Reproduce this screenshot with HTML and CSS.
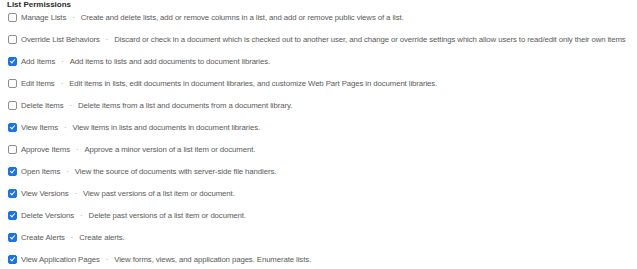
FILE: index.html
```html
<!DOCTYPE HTML>
<html lang="en">
  <head>
    <title>List Permissions</title>
    <meta charset="utf-8">
    <link rel="stylesheet" href="styles.css">
  </head>
  <body>

  <div id="permissions">
    <div class="heading">List Permissions</div>

    <label class="perm"><input type="checkbox"><span class="name">Manage Lists</span><span class="bull">&middot;</span><span class="desc">Create and delete lists, add or remove columns in a list, and add or remove public views of a list.</span></label>
    <label class="perm"><input type="checkbox"><span class="name">Override List Behaviors</span><span class="bull">&middot;</span><span class="desc">Discard or check in a document which is checked out to another user, and change or override settings which allow users to read/edit only their own items</span></label>
    <label class="perm"><input type="checkbox" checked><span class="name">Add Items</span><span class="bull">&middot;</span><span class="desc">Add items to lists and add documents to document libraries.</span></label>
    <label class="perm"><input type="checkbox"><span class="name">Edit Items</span><span class="bull">&middot;</span><span class="desc">Edit items in lists, edit documents in document libraries, and customize Web Part Pages in document libraries.</span></label>
    <label class="perm"><input type="checkbox"><span class="name">Delete Items</span><span class="bull">&middot;</span><span class="desc">Delete items from a list and documents from a document library.</span></label>
    <label class="perm"><input type="checkbox" checked><span class="name">View Items</span><span class="bull">&middot;</span><span class="desc">View items in lists and documents in document libraries.</span></label>
    <label class="perm"><input type="checkbox"><span class="name">Approve Items</span><span class="bull">&middot;</span><span class="desc">Approve a minor version of a list item or document.</span></label>
    <label class="perm"><input type="checkbox" checked><span class="name">Open Items</span><span class="bull">&middot;</span><span class="desc">View the source of documents with server-side file handlers.</span></label>
    <label class="perm"><input type="checkbox" checked><span class="name">View Versions</span><span class="bull">&middot;</span><span class="desc">View past versions of a list item or document.</span></label>
    <label class="perm"><input type="checkbox" checked><span class="name">Delete Versions</span><span class="bull">&middot;</span><span class="desc">Delete past versions of a list item or document.</span></label>
    <label class="perm"><input type="checkbox" checked><span class="name">Create Alerts</span><span class="bull">&middot;</span><span class="desc">Create alerts.</span></label>
    <label class="perm"><input type="checkbox" checked><span class="name">View Application Pages</span><span class="bull">&middot;</span><span class="desc">View forms, views, and application pages. Enumerate lists.</span></label>
  </div>

  </body>
</html>
```

FILE: styles.css
```css
html {
  height: 100%;
}
body {
  margin: 0;
  padding: 0;
  background: #ffffff;
  color: #5a5a5a;
  font-family: "Liberation Sans", Arial, sans-serif;
  font-size: 7.8px;
  letter-spacing: -0.1px;
  height: 100%;
}

#permissions {
  display: flex;
  flex-direction: column;
  padding: 0 0 0 7px;
}

.heading {
  font-weight: bold;
  font-size: 8px;
  letter-spacing: 0;
  color: #2b2b2b;
  height: 10px;
  line-height: 10px;
}

.perm {
  display: flex;
  align-items: center;
  height: 22px;
  margin-top: -4px;
  margin-bottom: 4px;
  white-space: nowrap;
}

.perm input {
  appearance: none;
  -webkit-appearance: none;
  position: relative;
  box-sizing: border-box;
  width: 9px;
  height: 9px;
  margin: 0 4px 0 1px;
  border: 1px solid #8f8f8f;
  border-radius: 2px;
  background: #fff;
}

.perm input:checked {
  background: #1a73e8;
  border-color: #1a73e8;
}

.perm input:checked::after {
  content: "";
  position: absolute;
  left: 2px;
  top: 0px;
  width: 2px;
  height: 4px;
  border: solid #fff;
  border-width: 0 1.4px 1.4px 0;
  transform: rotate(40deg);
}

.bull {
  padding: 0 6px;
  color: #888;
}
```
